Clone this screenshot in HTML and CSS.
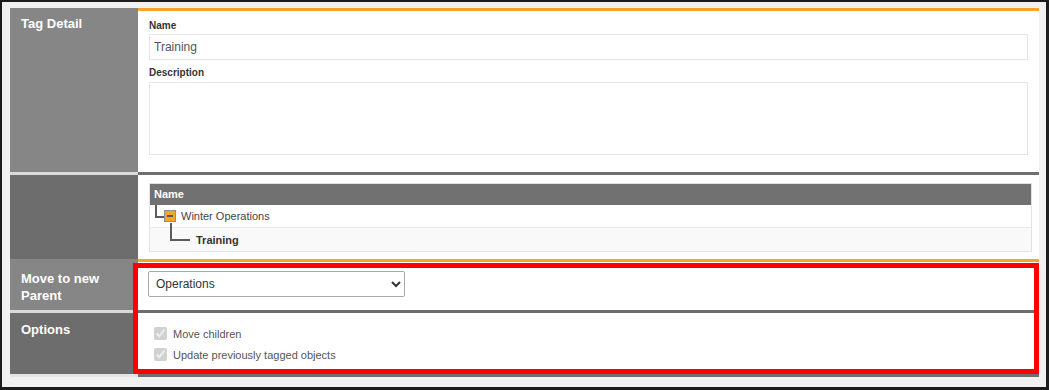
FILE: index.html
```html
<!DOCTYPE html>
<html lang="en">
<head>
  <meta charset="UTF-8" />
  <title>Tag Detail</title>
  <link rel="stylesheet" href="styles.css">
</head>
<body>
  <div class="frame">
    <div class="detail">
      <div class="row">
        <div class="label">Tag Detail</div>
        <div class="cell first">
          <div class="field-label">Name</div>
          <input class="text" type="text" value="Training" />
          <div class="field-label desc">Description</div>
          <textarea class="text area"></textarea>
        </div>
      </div>

      <div class="row dark">
        <div class="label"></div>
        <div class="cell tree-cell">
          <div class="tree">
            <div class="tree-head">Name</div>
            <div class="tree-row">
              <span class="elbow"></span>
              <span class="toggle"></span>
              <span class="node">Winter Operations</span>
            </div>
            <div class="tree-row child">
              <span class="elbow long"></span>
              <span class="node current">Training</span>
            </div>
          </div>
        </div>
      </div>

      <div class="row">
        <div class="label">Move to new Parent</div>
        <div class="cell parent-cell">
          <select class="parent-select">
            <option>Operations</option>
            <option>Winter Operations</option>
          </select>
        </div>
      </div>

      <div class="row dark last">
        <div class="label">Options</div>
        <div class="cell options">
          <label class="check"><input type="checkbox" checked disabled /> Move children</label>
          <label class="check"><input type="checkbox" checked disabled /> Update previously tagged objects</label>
        </div>
      </div>

      <div class="highlight"></div>
    </div>
  </div>
</body>
</html>
```

FILE: styles.css
```css
html, body {
  margin: 0;
  background: #1c1c1c;
  font-family: 'Liberation Sans', Arial, sans-serif;
}

.frame {
  margin: 2px 3px 3px 2px;
  height: 385px;
  box-sizing: border-box;
  padding: 6px 7px 0 8px;
  background: #f1f1f1;
}

.detail {
  position: relative;
}

.row {
  display: flex;
}

.label {
  flex: none;
  width: 128px;
  box-sizing: border-box;
  padding: 8px 11px 6px 11px;
  background: #868686;
  border-top: 3px solid #868686;
  color: #fff;
  font-size: 13px;
  font-weight: bold;
  line-height: 17px;
}

.row:first-child .label {
  padding-top: 4px;
}

.cell {
  flex: 1;
  min-width: 0;
  background: #fff;
  border-top: 3px solid #f5a623;
  padding: 9px 11px 13px 11px;
}

.row.dark .label {
  background: #6d6d6d;
  border-top-color: #dadada;
}

.row.dark .cell {
  border-top-color: #6e6e6e;
}

.row.last .cell {
  border-bottom: 3px solid #6e6e6e;
}

.row.last .label {
  border-bottom: 3px solid #e4e4e4;
}

/* tag detail fields */
.field-label {
  font-size: 10px;
  line-height: 12px;
  font-weight: bold;
  color: #333;
  margin-bottom: 2px;
}

.field-label.desc {
  margin-top: 7px;
  margin-bottom: 3px;
}

.text {
  display: block;
  width: 100%;
  box-sizing: border-box;
  height: 26px;
  margin: 0;
  border: 1px solid #e6e6e6;
  padding: 0 4px;
  font-family: 'Liberation Sans', Arial, sans-serif;
  font-size: 12px;
  color: #555;
  outline: none;
}

.text.area {
  height: 73px;
  resize: none;
}

.cell.first {
  padding-bottom: 17px;
}

/* tree */
.tree-cell {
  padding: 8px 7px 7px 11px;
}

.tree {
  border: 1px solid #e2e2e2;
}

.tree-head {
  height: 21px;
  line-height: 21px;
  padding-left: 4px;
  background: #717171;
  color: #fff;
  font-size: 11px;
  font-weight: bold;
}

.tree-row {
  display: flex;
  align-items: flex-start;
  height: 22px;
  border-bottom: 1px solid #ebebeb;
  background: #fff;
  font-size: 11px;
  color: #444;
}

.tree-row.child {
  height: 23px;
  border-bottom: none;
  background: #f9f9f9;
}

.elbow {
  flex: none;
  margin-left: 5px;
  width: 7px;
  height: 11px;
  border-left: 2px solid #5c5c5c;
  border-bottom: 2px solid #5c5c5c;
}

.elbow.long {
  margin-left: 20px;
  margin-top: -5px;
  width: 18px;
  height: 16px;
}

.toggle {
  flex: none;
  position: relative;
  width: 10px;
  height: 10px;
  margin-top: 5px;
  background: #f5a623;
  border: 1px solid #8e8e8e;
}

.toggle::after {
  content: "";
  position: absolute;
  left: 2px;
  top: 4px;
  width: 6px;
  height: 2px;
  background: #5a5a5a;
}

.node {
  margin-left: 5px;
  line-height: 23px;
}

.node.current {
  margin-left: 6px;
  line-height: 25px;
  font-weight: bold;
  color: #333;
}

/* parent select */
.parent-select {
  display: block;
  width: 257px;
  height: 26px;
  margin-left: -1px;
  border: 1px solid #a9a9a9;
  border-radius: 2px;
  background: #fff;
  padding-left: 3px;
  font-family: 'Liberation Sans', Arial, sans-serif;
  font-size: 12px;
  color: #333;
}

/* options */
.options {
  padding: 10px 11px 9px 11px;
}

.check {
  display: flex;
  align-items: center;
  height: 21px;
  font-size: 11px;
  color: #555;
}

.check input {
  margin: 0 6px 0 5px;
  width: 13px;
  height: 13px;
}

/* annotation box */
.highlight {
  position: absolute;
  left: 123px;
  top: 255px;
  width: 906px;
  height: 111px;
  box-sizing: border-box;
  border: 5px solid #ff0000;
  pointer-events: none;
}
```
